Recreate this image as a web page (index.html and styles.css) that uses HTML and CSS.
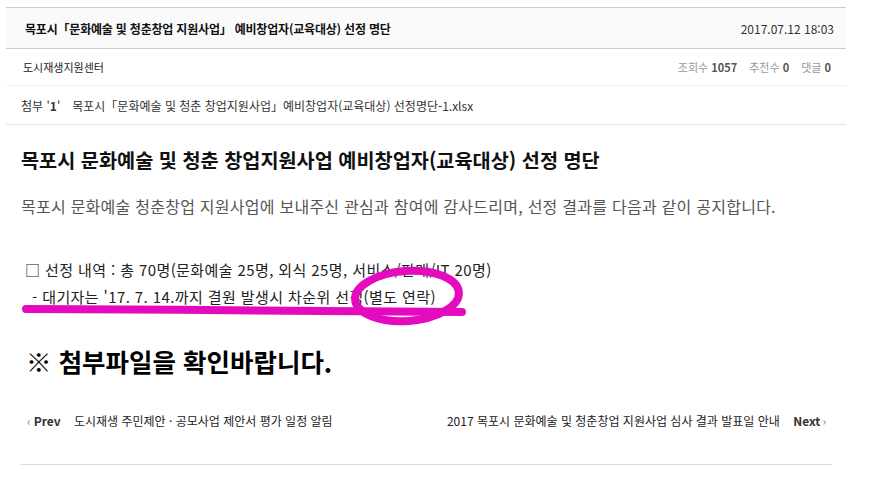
FILE: index.html
```html
<!DOCTYPE html>
<html lang="ko">
<head>
    <meta charset="UTF-8">
    <meta name="viewport" content="width=device-width, initial-scale=1">
    <title>목포시「문화예술 및 청춘창업 지원사업」 예비창업자(교육대상) 선정 명단</title>
    <link rel="stylesheet" href="styles.css">
</head>
<body>
    <div class="board_view">
        <div class="view_head">
            <h2 class="view_title">목포시「문화예술 및 청춘창업 지원사업」 예비창업자(교육대상) 선정 명단</h2>
            <span class="view_date">2017.07.12 18:03</span>
        </div>
        <div class="view_info">
            <span class="writer">도시재생지원센터</span>
            <ul class="count_list">
                <li>조회수 <b>1057</b></li>
                <li>추천수 <b>0</b></li>
                <li>댓글 <b>0</b></li>
            </ul>
        </div>
        <div class="view_file">
            <span class="file_label">첨부 '<b>1</b>'</span>
            <a href="#" class="file_name">목포시「문화예술 및 청춘 창업지원사업」예비창업자(교육대상) 선정명단-1.xlsx</a>
        </div>
        <div class="view_content">
            <h3 class="content_title">목포시 문화예술 및 청춘 창업지원사업 예비창업자(교육대상) 선정 명단</h3>
            <p class="content_text">목포시 문화예술 청춘창업 지원사업에 보내주신 관심과 참여에 감사드리며, 선정 결과를 다음과 같이 공지합니다.</p>
            <div class="result">
                <p>□ 선정 내역 : 총 70명(문화예술 25명, 외식 25명, 서비스/판매/IT 20명)</p>
                <p class="result_sub">- 대기자는 '17. 7. 14.까지 결원 발생시 차순위 선정(별도 연락)</p>
                <!-- 손으로 그린 강조 표시 -->
                <svg class="mark" width="460" height="75" viewBox="0 0 460 75">
                    <path d="M5 53 C 150 54, 320 54, 441 56" fill="none" stroke="#e40bbf" stroke-width="8" stroke-linecap="round"/>
                    <ellipse cx="386" cy="40" rx="52" ry="25" transform="rotate(-4 386 40)" fill="none" stroke="#e40bbf" stroke-width="8"/>
                </svg>
            </div>
            <p class="notice">※ 첨부파일을 확인바랍니다.</p>
        </div>
        <div class="view_nav">
            <a href="#" class="nav_prev"><span class="arrow">‹</span><b>Prev</b> 도시재생 주민제안 · 공모사업 제안서 평가 일정 알림</a>
            <a href="#" class="nav_next">2017 목포시 문화예술 및 청춘창업 지원사업 심사 결과 발표일 안내 <b>Next</b><span class="arrow">›</span></a>
        </div>
    </div>
</body>
</html>
```

FILE: styles.css
```css
body {
    margin: 0;
    font-family: "Noto Sans CJK KR", "Noto Sans", sans-serif;
    color: #222;
    background: #fff;
}

a {
    color: inherit;
    text-decoration: none;
}

.board_view {
    width: 840px;
    margin: 7px 0 0 6px;
}

.view_head {
    display: flex;
    align-items: center;
    justify-content: space-between;
    height: 40px;
    padding: 0 12px 0 19px;
    border-top: 1px solid #ccc;
    border-bottom: 1px solid #ccc;
    background: #fafafa;
}

.view_title {
    margin: 0;
    font-size: 12px;
    font-weight: bold;
    letter-spacing: -0.2px;
    color: #111;
}

.view_date {
    font-size: 12px;
    color: #333;
}

.view_info {
    display: flex;
    align-items: center;
    justify-content: space-between;
    height: 36px;
    padding: 0 15px 0 17px;
    border-bottom: 1px solid #eee;
    font-size: 11px;
}

.count_list {
    display: flex;
    gap: 12px;
    margin: 0;
    padding: 0;
    list-style: none;
    color: #999;
}

.count_list b {
    color: #555;
}

.view_file {
    display: flex;
    align-items: center;
    gap: 12px;
    height: 38px;
    padding: 0 14px 0 15px;
    border-bottom: 1px solid #e5e5e5;
    font-size: 12px;
    color: #333;
}

.view_content {
    padding: 20px 15px 0;
}

.content_title {
    margin: 0;
    font-size: 19.7px;
    font-weight: bold;
    color: #111;
}

.content_text {
    margin: 20px 0 0;
    font-size: 16px;
    letter-spacing: 0.25px;
    color: #555;
}

.result {
    position: relative;
    margin-top: 38px;
    font-size: 15px;
    letter-spacing: 0.4px;
    color: #222;
}

.result p {
    margin: 0;
    padding-left: 4px;
    line-height: 27px;
}

.result .result_sub {
    padding-left: 11px;
}

.mark {
    position: absolute;
    left: 0;
    top: 0;
}

.notice {
    margin: 32px 0 0;
    padding-left: 5px;
    font-size: 25.5px;
    font-weight: bold;
    color: #000;
}

.view_nav {
    display: flex;
    justify-content: space-between;
    margin: 33px 14px 0;
    padding: 0 6px 35px 7px;
    border-bottom: 1px solid #ddd;
    font-size: 12px;
    color: #222;
}

.view_nav b {
    margin: 0 10px 0 3px;
    color: #333;
}

.nav_next b {
    margin: 0 2px 0 10px;
}

.arrow {
    color: #888;
}
```
